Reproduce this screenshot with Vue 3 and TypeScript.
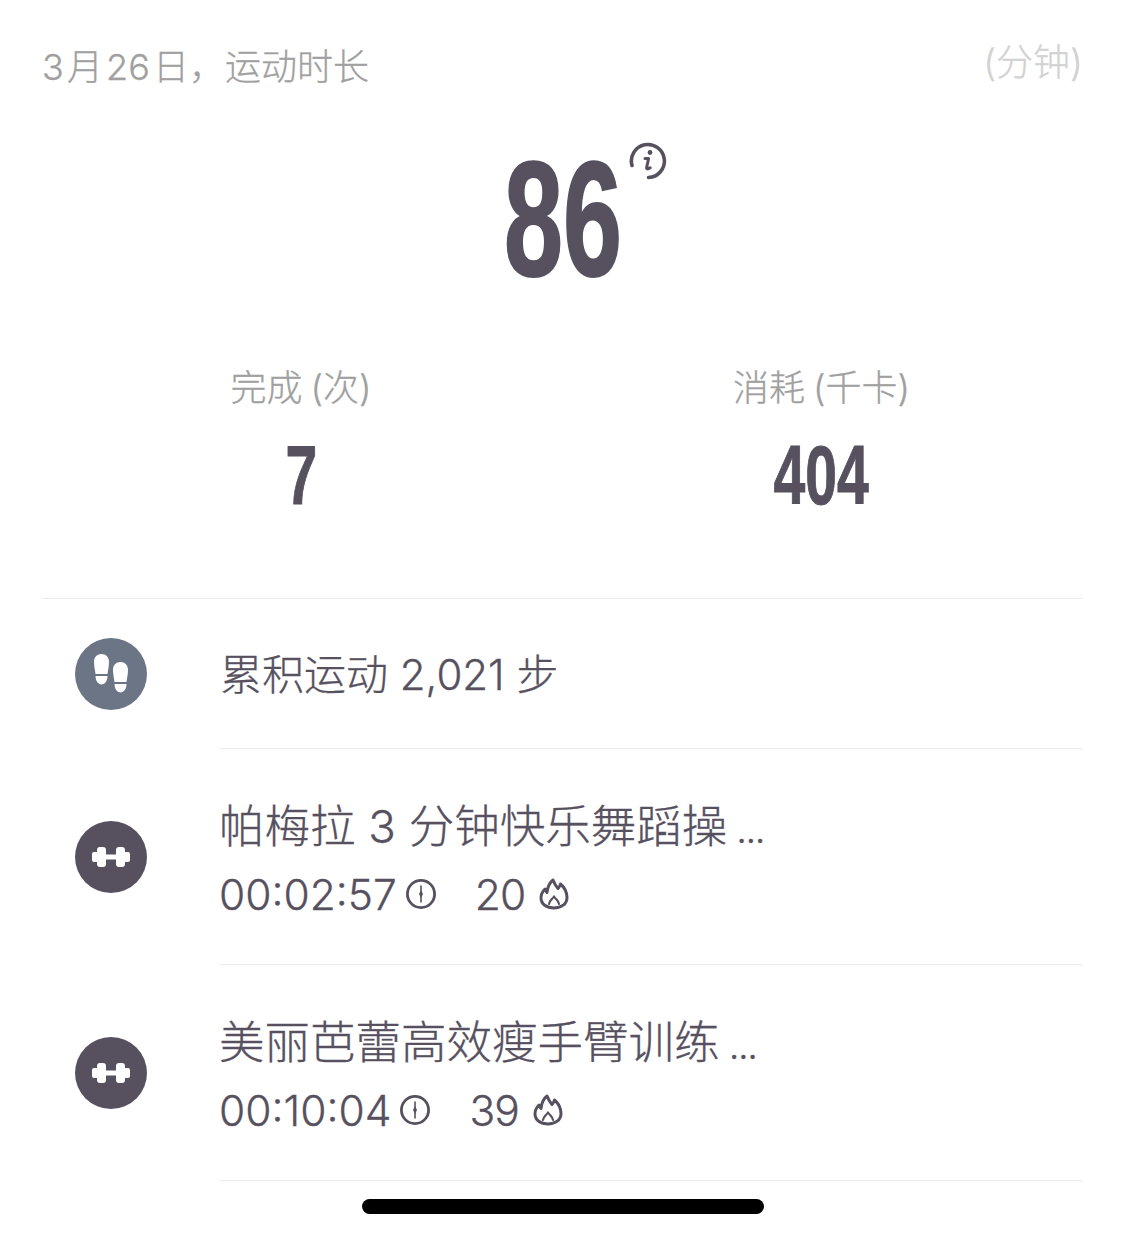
<script setup lang="ts">
interface Item { title: string; time: string; cal: string; }
const items: Item[] = [
  { title: '帕梅拉 3 分钟快乐舞蹈操', time: '00:02:57', cal: '20' },
  { title: '美丽芭蕾高效瘦手臂训练', time: '00:10:04', cal: '39' },
];
</script>

<template>
  <main class="page">
    <header class="head">
      <span class="date">3 月 26 日，运动时长</span>
      <span class="unit">(分钟)</span>
    </header>
    <section class="hero">
      <span class="big-wrap">
        <span class="big">86</span>
        <svg class="info" viewBox="0 0 38 38" fill="none" stroke="#57515f" stroke-width="3.6" stroke-linecap="round">
          <path d="M3 23.5A16.5 16.5 0 1 1 19.5 35.5" />
          <circle cx="21" cy="10.5" r="2.4" fill="#57515f" stroke="none" />
          <path d="M16 16.5h3.6l-2 9.2c-.3 1.4 1.2 1.7 3.6.1" stroke-width="3" stroke-linejoin="round" />
        </svg>
      </span>
    </section>
    <section class="stats">
      <div class="stat stat-a">
        <span class="label">完成 (次)</span>
        <span class="num">7</span>
      </div>
      <div class="stat stat-b">
        <span class="label">消耗 (千卡)</span>
        <span class="num">404</span>
      </div>
    </section>
    <div class="rule"></div>
    <section class="row row-steps">
      <span class="badge steps">
        <svg viewBox="0 0 36 40" width="36" height="40" fill="#fff">
          <path d="M1 8C1 3 4 0 8.500 0S16 3 16 8c0 4-1 8-1.500 12h-12C2 16 1 12 1 8Z" />
          <path d="M2.500 22h12c0 4.500-2.500 8.500-6 8.500s-6-4-6-8.500Z" />
          <path d="M20 16c0-5 3-8 7.500-8S35 11 35 16c0 4-1 8-1.500 12h-12C21 24 20 20 20 16Z" />
          <path d="M21.500 30h12c0 4.500-2.500 8.500-6 8.500s-6-4-6-8.500Z" />
        </svg>
      </span>
      <div class="body body-steps">累积运动 2,021 步</div>
    </section>
    <section v-for="item in items" :key="item.time" class="row">
      <span class="badge">
        <svg viewBox="0 0 38 20" width="38" height="20" fill="#fff">
          <rect x="0" y="5" width="8" height="10" rx="2" />
          <rect x="5" y="0" width="9" height="20" rx="3" />
          <rect x="12" y="7.500" width="14" height="5" />
          <rect x="24" y="0" width="9" height="20" rx="3" />
          <rect x="30" y="5" width="8" height="10" rx="2" />
        </svg>
      </span>
      <div class="body">
        <div class="title">{{ item.title }}<span class="ell"> ...</span></div>
        <div class="meta">
          <span>{{ item.time }}</span>
          <svg class="clock" viewBox="0 0 32 32" fill="none" stroke="#57515f" stroke-width="2.800">
            <circle cx="16" cy="16" r="13.600" />
            <path d="M16 8v16" stroke-width="1.600" stroke-linecap="round" />
            <path d="M16 12l2 4-2 4-2-4Z" fill="#57515f" stroke="none" />
          </svg>
          <span class="cal">{{ item.cal }}</span>
          <svg class="flame" viewBox="0 0 30 32" fill="none" stroke="#57515f" stroke-width="3" stroke-linejoin="round" stroke-linecap="round">
            <path d="M14 2c1.500 4 3 6 5 8.500 1-1.500 2-2.500 2.500-4.500C25.500 9.500 28 14.500 28 19.500 28 26 22.500 30 15 30S2 26 2 20c0-3.500 1.500-6.500 4-9 .5 1.500 1 2.500 2 3.500C8.500 10 10 5 14 2Z" />
            <path d="M10 26c0-3 3-4.500 5-7.500 2 3 5 4.500 5 7.500" stroke-width="2.200" />
          </svg>
        </div>
      </div>
    </section>
    <div class="home-bar"></div>
  </main>
</template>

<style>
html, body { margin: 0; background: #fff; }
</style>

<style scoped>
.page {
  position: relative;
  box-sizing: border-box;
  width: 1125px;
  height: 1237px;
  overflow: hidden;
  padding: 42px 42px 0;
  background: #fff;
  color: #57515f;
  font-family: "Inter", "Noto Sans CJK SC", sans-serif;
  font-weight: 300;
  -webkit-text-stroke: 0.3px currentColor;
}
.head {
  display: flex;
  justify-content: space-between;
  align-items: flex-start;
  height: 50px;
}
.date { font-size: 36px; line-height: 50px; color: #a0a0a0; word-spacing: -7px; }
.unit { font-size: 37px; line-height: 42px; color: #d2d2d2; }
.hero {
  display: flex;
  justify-content: center;
  height: 250px;
}
.big-wrap { position: relative; display: block; width: 116px; height: 250px; }
.big, .num {
  display: block;
  font-family: "Liberation Sans Narrow", "Liberation Sans", sans-serif;
  font-weight: 700;
  color: #57515f;
  text-align: center;
}
.big {
  position: absolute;
  left: -60px;
  width: 236px;
  top: 42px;
  font-size: 163px;
  line-height: 170px;
  transform: scaleX(0.65);
  -webkit-text-stroke: 2px #57515f;
}
.info { position: absolute; left: 124px; top: 50px; width: 38px; height: 38px; }
.stats { display: flex; height: 256px; }
.stat { display: flex; flex-direction: column; align-items: center; position: relative; }
.stat-a { width: 518px; }
.stat-b { width: 523px; }
.label { font-size: 36px; line-height: 50px; color: #a0a0a0; margin-top: 21px; white-space: nowrap; word-spacing: -2px; }
.num {
  font-size: 84px;
  line-height: 90px;
  margin-top: 17px;
  transform: scaleX(0.68);
  -webkit-text-stroke: 1px #57515f;
}
.rule { height: 1px; background: #ececec; }
.row {
  display: flex;
  align-items: center;
  height: 216px;
  margin-left: 33px;
}
.row-steps { height: 150px; }
.badge {
  flex: none;
  width: 72px;
  height: 72px;
  border-radius: 50%;
  background: #57515f;
  display: flex;
  align-items: center;
  justify-content: center;
  margin-right: 73px;
}
.steps { background: #6c7585; }
.body {
  flex: 1;
  height: 100%;
  box-sizing: border-box;
  border-bottom: 1px solid #ececec;
  padding-top: 48px;
}
.body-steps {
  display: flex;
  align-items: center;
  padding-top: 0;
  padding-bottom: 4px;
  font-size: 42px;
}
.title { font-size: 45.500px; line-height: 60px; white-space: nowrap; margin-left: -1px; }
.ell { font-size: 38px; letter-spacing: -1.500px; }
.meta {
  display: flex;
  align-items: center;
  height: 50px;
  margin-top: 10px;
  margin-left: -1px;
  font-size: 42.500px;
}
.clock { width: 32px; height: 32px; margin-left: 8px; }
.cal { margin-left: 38px; letter-spacing: -1px; }
.flame { width: 30px; height: 32px; margin-left: 14px; }
.home-bar {
  position: absolute;
  left: 362px;
  top: 1199px;
  width: 402px;
  height: 15px;
  border-radius: 8px;
  background: #000;
}
</style>
